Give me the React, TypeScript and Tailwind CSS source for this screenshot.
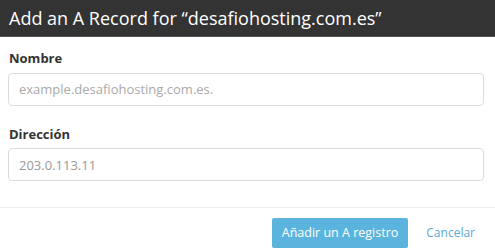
export default function App() {
  return (
    <div className="w-[495px] h-[249px] bg-white overflow-hidden" style={{ fontFamily: '"Open Sans", sans-serif' }}>
      <div className="h-[37px] bg-[#333333] flex items-center px-[9px] border-b border-[#555]">
        <h1 className="text-[18px] text-white leading-none">Add an A Record for “desafiohosting.com.es”</h1>
      </div>
      <div className="px-[8px] pt-[12px]">
        <label className="block text-[13px] font-bold text-[#333] mb-[4px] pl-[1px]">Nombre</label>
        <input
          className="w-[476px] h-[33px] border border-[#dcdcdc] rounded-[4px] px-[10px] text-[13px] text-[#999] placeholder:text-[#aaa] outline-none"
          placeholder="example.desafiohosting.com.es."
        />
        <label className="block text-[13px] font-bold text-[#333] mt-[19px] mb-[4px] pl-[1px]">Dirección</label>
        <input
          className="w-[476px] h-[33px] border border-[#dcdcdc] rounded-[4px] px-[10px] text-[13px] text-[#999] outline-none"
          defaultValue="203.0.113.11"
        />
      </div>
      <div className="mt-[26px] border-t border-[#eeeeee] flex justify-end items-center gap-[18px] pr-[20px] pt-[10px]">
        <button className="h-[30px] px-[10px] bg-[#5bb4dd] text-white text-[12.5px] rounded-[2px]">Añadir un A registro</button>
        <button className="text-[#5aa8d6] text-[12px]">Cancelar</button>
      </div>
    </div>
  );
}
